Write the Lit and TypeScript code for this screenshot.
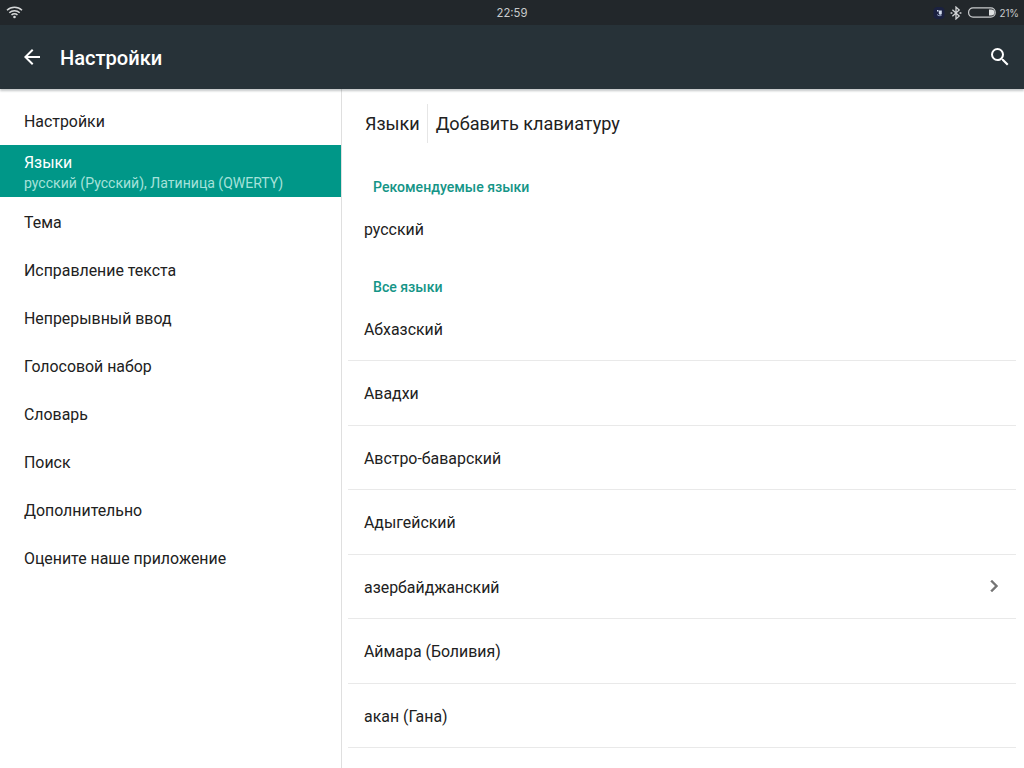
// keyboard settings screen: section list on the left, language list on the right
import { LitElement, html, css, nothing } from 'lit';
import { customElement, property, state } from 'lit/decorators.js';
import { classMap } from 'lit/directives/class-map.js';

interface Section {
	title: string;
	summary?: string;
}

interface Language {
	name: string;
	nested?: boolean;
}

const SECTIONS: Section[] = [
	{ title: 'Настройки' },
	{ title: 'Языки', summary: 'русский (Русский), Латиница (QWERTY)' },
	{ title: 'Тема' },
	{ title: 'Исправление текста' },
	{ title: 'Непрерывный ввод' },
	{ title: 'Голосовой набор' },
	{ title: 'Словарь' },
	{ title: 'Поиск' },
	{ title: 'Дополнительно' },
	{ title: 'Оцените наше приложение' },
];

const RECOMMENDED: Language[] = [{ name: 'русский' }];

const LANGUAGES: Language[] = [
	{ name: 'Абхазский' },
	{ name: 'Авадхи' },
	{ name: 'Австро-баварский' },
	{ name: 'Адыгейский' },
	{ name: 'азербайджанский', nested: true },
	{ name: 'Аймара (Боливия)' },
	{ name: 'акан (Гана)' },
];

@customElement('status-bar')
class StatusBar extends LitElement {
	static styles = css`
		:host {
			display: grid;
			grid-template-columns: 1fr auto 1fr;
			align-items: center;
			box-sizing: border-box;
			height: 25px;
			padding: 0 6px;
			background: #22272b;
			color: #c9cbcd;
			font-size: 11px;
		}
		svg {
			display: block;
		}
		.clock {
			font-family: Inter, Roboto, sans-serif;
			font-size: 11.3px;
			padding-top: 1px;
		}
		.right {
			display: flex;
			align-items: center;
			justify-content: flex-end;
		}
		.app {
			margin-right: 5px;
		}
		.bluetooth {
			margin-right: 6px;
		}
		.battery {
			margin-right: 3px;
		}
		.percent {
			font-family: Inter, Roboto, sans-serif;
			font-size: 9.8px;
			padding-top: 1px;
			margin-right: -1px;
		}
	`;

	render() {
		return html`
			<svg width="17" height="13" viewBox="0 0 17 13" fill="none" stroke="#d6d8d9" stroke-width="1.5">
				<path d="M1 4.3a10.8 10.8 0 0 1 15 0" />
				<path d="M3.3 6.7a7.6 7.6 0 0 1 10.4 0" />
				<path d="M5.5 9a4.4 4.4 0 0 1 6 0" />
				<circle cx="8.5" cy="11" r="1.3" fill="#d6d8d9" stroke="none" />
			</svg>
			<div class="clock">22:59</div>
			<div class="right">
				<svg class="app" width="12" height="14" viewBox="0 0 12 14">
					<rect x="0.5" y="1" width="11" height="12" rx="4" fill="#1b2140" />
					<path d="M4 4h1.4v1.6H4zM5.8 4.4h3v3.4a1.6 1.6 0 0 1-3 0z" fill="#d3dcee" />
					<path d="M4.2 8.6c1 1.2 3 1.4 4.4.6" fill="none" stroke="#a3b0d0" />
				</svg>
				<svg class="bluetooth" width="12" height="14" viewBox="0 0 12 14" fill="none" stroke="#d2d4d6" stroke-width="1.3">
					<path d="M2.4 3.8l6.8 6.2L6 12.9V1.1L9.2 4 2.4 10.2" />
					<path d="M.6 7h1.8M9.6 7h1.8" stroke-width="1.6" />
				</svg>
				<svg class="battery" width="28" height="11" viewBox="0 0 28 11">
					<rect x="0.6" y="0.8" width="26.6" height="9.4" rx="4.4" fill="none" stroke="#c9cbcd" stroke-width="1.2" />
					<path d="M21 2.5h2.4a3 3 0 0 1 0 6H21z" fill="#e0e2e3" />
				</svg>
				<span class="percent">21%</span>
			</div>
		`;
	}
}

@customElement('tool-bar')
class ToolBar extends LitElement {
	static styles = css`
		:host {
			display: flex;
			align-items: center;
			box-sizing: border-box;
			height: 64px;
			padding: 0 12px 0 20px;
			background: #273238;
			color: #fff;
			position: relative;
			z-index: 1;
			box-shadow: 0 2px 2px rgba(39, 50, 56, 0.27);
		}
		svg {
			display: block;
			fill: #fff;
		}
		.title {
			flex: 1;
			margin: 0 0 0 16px;
			padding-top: 2px;
			font-size: 20.1px;
			font-weight: 500;
		}
	`;

	@property() heading = '';

	render() {
		return html`
			<svg width="24" height="24" viewBox="0 0 24 24">
				<path d="M20 11H7.83l5.59-5.59L12 4l-8 8 8 8 1.41-1.41L7.83 13H20v-2z" />
			</svg>
			<h1 class="title">${this.heading}</h1>
			<svg width="24" height="24" viewBox="0 0 24 24">
				<path
					d="M15.5 14h-.79l-.28-.27A6.471 6.471 0 0 0 16 9.5 6.5 6.5 0 1 0 9.5 16c1.61 0 3.09-.59 4.23-1.57l.27.28v.79l5 4.99L20.49 19l-4.99-5zm-6 0C7.01 14 5 11.99 5 9.5S7.01 5 9.5 5 14 7.01 14 9.5 11.99 14 9.5 14z"
				/>
			</svg>
		`;
	}
}

@customElement('app-root')
class AppRoot extends LitElement {
	static styles = css`
		:host {
			display: flex;
			flex-direction: column;
			width: 100%;
			height: 100vh;
			overflow: hidden;
			background: #fff;
			color: #212121;
			font-family: Roboto, 'Noto Sans', sans-serif;
			font-size: 15.9px;
		}
		status-bar,
		tool-bar {
			flex: none;
		}
		.body {
			flex: 1;
			min-height: 0;
			display: flex;
		}
		.sections {
			flex: none;
			width: 341px;
			padding-top: 8px;
			border-right: 1px solid #dfdfdf;
		}
		.section {
			display: flex;
			flex-direction: column;
			justify-content: center;
			box-sizing: border-box;
			height: 48px;
			padding: 2px 0 0 24px;
			line-height: 20px;
			cursor: pointer;
		}
		.section.tall {
			height: 52.4px;
			margin-bottom: 0.6px;
			padding-top: 3.6px;
		}
		.section.active {
			background: #009788;
			color: #fff;
		}
		.summary {
			font-size: 14.05px;
			color: #a6e2da;
		}
		.content {
			flex: 1;
			min-width: 0;
			padding: 0 8px 0 6px;
		}
		.tabs {
			display: flex;
			align-items: center;
			height: 39px;
			padding: 15px 0 18px 17px;
			font-size: 18px;
		}
		.tab {
			line-height: 39px;
		}
		.tab + .tab {
			margin-left: 7px;
			padding-left: 8px;
			border-left: 1px solid #e6e6e6;
			font-size: 18.1px;
		}
		.group {
			margin: 0;
			box-sizing: border-box;
			height: 35.5px;
			padding: 16px 0 0 25px;
			font-size: 14.1px;
			font-weight: 500;
			line-height: 20px;
			color: #159587;
		}
		.language {
			display: flex;
			align-items: center;
			justify-content: space-between;
			box-sizing: border-box;
			height: 64.5px;
			padding: 0 10px 0 16px;
			border-bottom: 1px solid #e9e9e9;
		}
		.language.plain {
			border-bottom-color: transparent;
		}
		.name {
			padding-top: 1.5px;
		}
		.chevron {
			display: block;
			fill: #757575;
			stroke: #757575;
			stroke-width: 0.4;
		}
	`;

	@state() private selected = 1;

	renderSection(section: Section, index: number) {
		const classes = { section: true, tall: !!section.summary, active: index === this.selected };
		return html`
			<div class=${classMap(classes)} @click=${() => (this.selected = index)}>
				<div>${section.title}</div>
				${section.summary ? html`<div class="summary">${section.summary}</div>` : nothing}
			</div>
		`;
	}

	renderLanguage(language: Language, plain = false) {
		return html`
			<div class=${classMap({ language: true, plain })}>
				<span class="name">${language.name}</span>
				${language.nested
					? html`<svg class="chevron" width="24" height="24" viewBox="0 0 24 24">
							<path d="M10 6L8.59 7.41 13.17 12l-4.58 4.59L10 18l6-6z" />
						</svg>`
					: nothing}
			</div>
		`;
	}

	render() {
		return html`
			<status-bar></status-bar>
			<tool-bar heading="Настройки"></tool-bar>
			<div class="body">
				<nav class="sections">${SECTIONS.map((s, i) => this.renderSection(s, i))}</nav>
				<main class="content">
					<div class="tabs">
						<div class="tab">Языки</div>
						<div class="tab">Добавить клавиатуру</div>
					</div>
					<h2 class="group">Рекомендуемые языки</h2>
					${RECOMMENDED.map((l) => this.renderLanguage(l, true))}
					<h2 class="group">Все языки</h2>
					${LANGUAGES.map((l) => this.renderLanguage(l))}
				</main>
			</div>
		`;
	}
}
